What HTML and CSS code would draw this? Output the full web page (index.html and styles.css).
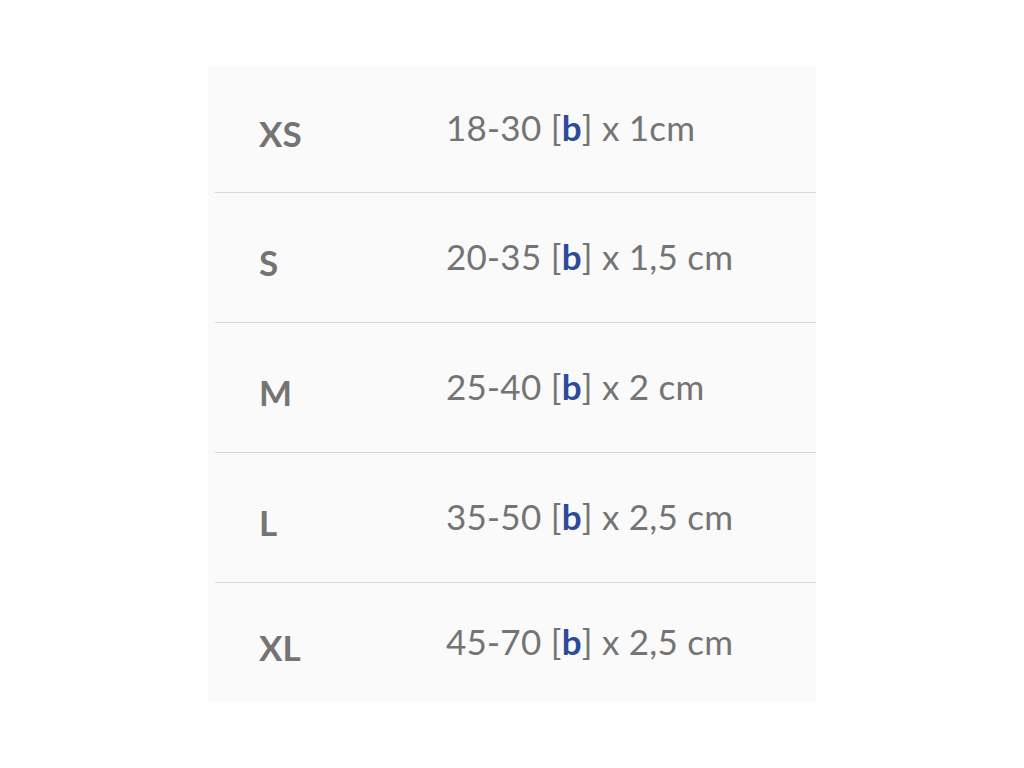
FILE: index.html
```html
<!DOCTYPE html>
<html>
<head>
<meta charset="utf-8">
<link rel="stylesheet" href="styles.css">
</head>
<body>
<div class="panel">
  <div class="row first"><div class="size">XS</div><div class="val">18-30 [<b>b</b>] x 1cm</div></div>
  <div class="row"><div class="size">S</div><div class="val">20-35 [<b>b</b>] x 1,5 cm</div></div>
  <div class="row"><div class="size">M</div><div class="val">25-40 [<b>b</b>] x 2 cm</div></div>
  <div class="row"><div class="size">L</div><div class="val">35-50 [<b>b</b>] x 2,5 cm</div></div>
  <div class="row last"><div class="size">XL</div><div class="val">45-70 [<b>b</b>] x 2,5 cm</div></div>
</div>
</body>
</html>
```
FILE: styles.css
```css
html, body { margin: 0; padding: 0; background: #ffffff; }
body { font-family: Lato, "Open Sans", sans-serif; color: #747474; }
.panel {
  margin: 66px 0 0 208px;
  width: 601px;
  padding-left: 7px;
  background: #fafafa;
}
.row {
  height: 129px;
  border-bottom: 1px solid #d8d8d8;
  display: flex;
  align-items: center;
}
.row.first { height: 126px; }
.row.last { height: 119px; border-bottom: none; }
.size {
  width: 231px;
  padding-left: 44px;
  box-sizing: border-box;
  font-weight: 700;
  font-size: 35px;
  padding-top: 8px;
}
.val {
  font-size: 35px;
  letter-spacing: 0.25px;
  margin-top: -4px;
}
.val b { color: #2d4a9a; font-weight: 700; }
```
